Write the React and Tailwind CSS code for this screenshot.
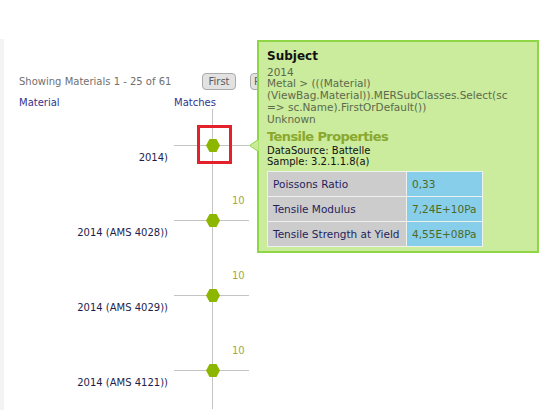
import React from "react";

function Hex() {
  return (
    <svg width="14" height="13" viewBox="0 0 14 13" className="block">
      <polygon points="0,6.5 3.5,0 10.5,0 14,6.5 10.5,13 3.5,13" fill="#8db600" />
    </svg>
  );
}

function ChartRow({ label, count, first }) {
  return (
    <div className="flex h-[75px]">
      <div className="w-[149px] shrink-0 pt-[43px] text-right text-[10px] leading-[12px] text-[#1e1e4e] whitespace-nowrap">
        {label}
      </div>
      <div className="relative ml-[6px] w-[75px] shrink-0">
        <div className="absolute left-0 right-0 top-[36px] h-px bg-[#c4c4c4]" />
        <div className="absolute left-[32px] top-[30px]">
          <Hex />
        </div>
        {count && (
          <div className="absolute left-[58px] top-[11px] text-[10px] leading-[12px] text-[#a8a83a]">
            {count}
          </div>
        )}
        {first && (
          <div className="absolute left-[23px] top-[16px] h-[39px] w-[35px] border-[3px] border-[#e3212b]" />
        )}
      </div>
    </div>
  );
}

export default function App() {
  const rows = [
    { label: "2014)", first: true },
    { label: "2014 (AMS 4028))", count: "10" },
    { label: "2014 (AMS 4029))", count: "10" },
    { label: "2014 (AMS 4121))", count: "10" },
  ];
  return (
    <div className="relative h-[410px] w-[549px] overflow-hidden bg-white font-['DejaVu_Sans',sans-serif]">
      <div className="h-[39px]" />
      <div className="flex">
        <div className="h-[371px] w-[4px] shrink-0 bg-[#f3f3f3]" />
        <div className="relative flex-1 pl-[15px]">
          <div className="mt-[34px] flex h-[17px] items-center">
            <span className="w-[183px] shrink-0 text-[10px] leading-[12px] text-[#707070]">
              Showing Materials 1 - 25 of 61
            </span>
            <span className="flex h-[17px] w-[34px] items-center justify-center rounded-[4px] border border-[#ababab] bg-[#e2e2e2] text-[10px] leading-[12px] text-[#5a5a5a]">
              First
            </span>
            <div className="ml-[14px] h-[17px] w-[7px] overflow-hidden">
              <span className="flex h-[17px] w-[20px] items-center rounded-[4px] border border-[#ababab] bg-[#e2e2e2] pl-[3px] text-[10px] leading-[12px] text-[#5a5a5a]">
                P
              </span>
            </div>
          </div>
          <div className="mt-[7px] flex text-[10px] leading-[12px] text-[#33338f]">
            <span className="w-[155px] shrink-0">Material</span>
            <span>Matches</span>
          </div>
          <div className="relative">
            <div className="absolute bottom-0 left-[193px] top-0 w-px bg-[#c4c4c4]" />
            {rows.map((r, i) => (
              <ChartRow key={i} {...r} />
            ))}
          </div>
        </div>
      </div>

      {/* tooltip */}
      <div className="absolute left-[249px] top-[139px] z-10">
        <svg width="10" height="13" viewBox="0 0 10 13" className="block">
          <polygon points="10,0 0.5,6.5 10,13" fill="#c9ea98" stroke="#8fd646" strokeWidth="1" />
        </svg>
      </div>
      <div className="absolute left-[257px] top-[40px] h-[213px] w-[282px] border-2 border-[#8fd646] bg-[#cbeb9d] pl-[8px] pt-[7px]">
        <div className="text-[12px] font-bold leading-[14px] text-[#111111]">Subject</div>
        <div className="mt-[3.5px] whitespace-nowrap text-[10.5px] leading-[11.75px] text-[#5c6a4c]">
          <div>2014</div>
          <div>Metal &gt; (((Material)</div>
          <div>(ViewBag.Material)).MERSubClasses.Select(sc</div>
          <div>=&gt; sc.Name).FirstOrDefault())</div>
          <div>Unknown</div>
        </div>
        <div className="mt-[4px] text-[13px] font-bold leading-[16px] tracking-[-0.6px] text-[#8aa82c]">
          Tensile Properties
        </div>
        <div className="text-[10px] leading-[11px] text-[#111111]">
          <div>DataSource: Battelle</div>
          <div>Sample: 3.2.1.1.8(a)</div>
        </div>
        <div className="mt-[4px] grid w-[216px] grid-cols-[138px_75px] gap-px bg-[#eef2ee] p-px text-[10.5px] leading-[12px]">
          <div className="flex h-[24px] items-center bg-[#cccccc] pl-[5px] text-[#1f1f5c]">Poissons Ratio</div>
          <div className="flex h-[24px] items-center bg-[#87ceeb] pl-[5px] text-[#4f6a22]">0,33</div>
          <div className="flex h-[24px] items-center bg-[#cccccc] pl-[5px] text-[#1f1f5c]">Tensile Modulus</div>
          <div className="flex h-[24px] items-center bg-[#87ceeb] pl-[5px] text-[#4f6a22]">7,24E+10Pa</div>
          <div className="flex h-[24px] items-center bg-[#cccccc] pl-[5px] text-[#1f1f5c] whitespace-nowrap">Tensile Strength at Yield</div>
          <div className="flex h-[24px] items-center bg-[#87ceeb] pl-[5px] text-[#4f6a22]">4,55E+08Pa</div>
        </div>
      </div>
    </div>
  );
}
